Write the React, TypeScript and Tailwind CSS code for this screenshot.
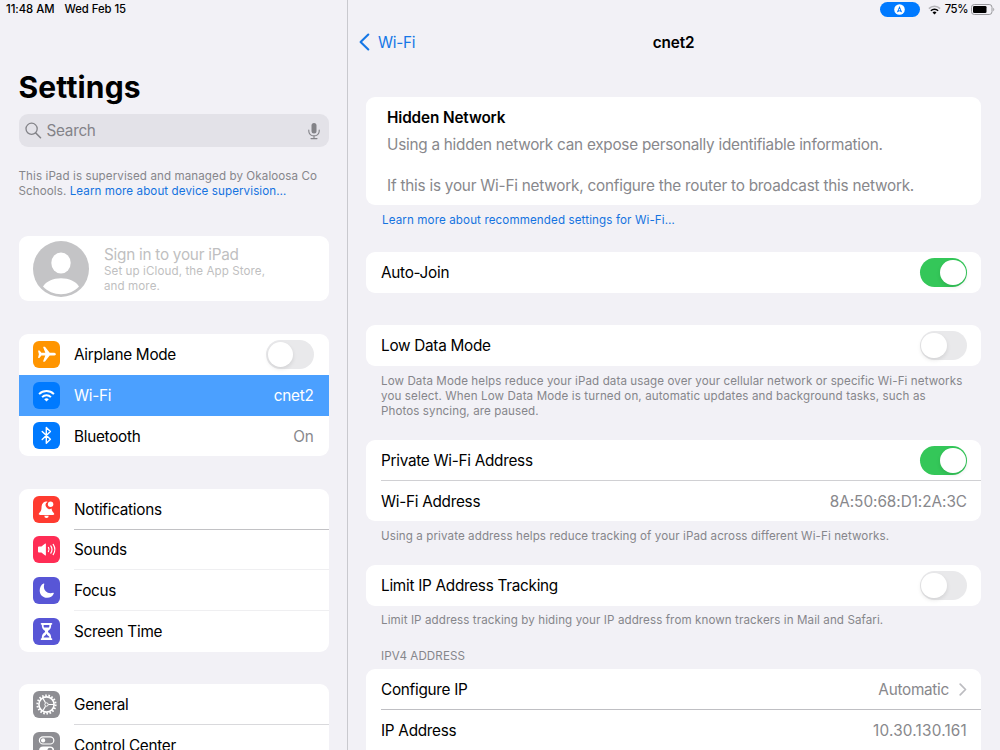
import type { ReactNode } from "react";

const body = "text-[15.3px] leading-[20px] tracking-[-0.27px]";
const foot = "text-[11.6px] leading-[14.8px] tracking-[0.09px]";

function Toggle({ on = false }: { on?: boolean }) {
  return (
    <span
      className={`flex h-[29px] w-[47.5px] shrink-0 items-center rounded-full px-[1.5px] ${
        on ? "justify-end bg-[#34c759]" : "justify-start bg-[#e9e9eb]"
      }`}
    >
      <span className="size-[25.5px] rounded-full bg-white shadow-[0_2px_4px_rgba(0,0,0,0.10)]" />
    </span>
  );
}

function Plane() {
  return (
    <svg viewBox="0 0 27 27" className="size-full" fill="#fff">
      <path d="M22.9 13.2c0 .8-1 1.4-2.6 1.4h-3.6l-4.5 5.700c-.2.3-.4.4-.8.4h-.9c-.3 0-.4-.3-.3-.6l2.1-5.500H8.400l-1.600 2c-.2.2-.3.3-.6.3h-.8c-.3 0-.4-.2-.3-.5l.8-3.200-.8-3.200c-.1-.3 0-.5.3-.5h.8c.3 0 .4.1.6.3l1.600 2h3.900l-2.100-5.500c-.1-.3 0-.6.3-.6h.9c.4 0 .6.1.8.4l4.500 5.700h3.600c1.600 0 2.600.6 2.600 1.400z" />
    </svg>
  );
}

function WifiGlyph() {
  return (
    <svg viewBox="0 0 27 27" className="size-full" fill="none" stroke="#fff" strokeWidth="2">
      <path d="M6.100 12.100a10.600 10.600 0 0 1 14.800 0" />
      <path d="M9.100 15.100a6.300 6.300 0 0 1 8.800 0" />
      <path d="M13.500 19.600l-2.300-2.300a3.300 3.300 0 0 1 4.600 0z" fill="#fff" stroke="none" />
    </svg>
  );
}

function BluetoothGlyph() {
  return (
    <svg viewBox="0 0 27 27" className="size-full" fill="none" stroke="#fff" strokeWidth="1.400" strokeLinejoin="round" strokeLinecap="round">
      <path d="M9.200 9.400l8.200 7.800-4.100 4.100V5.500l4.100 4.100-8.200 7.800" />
    </svg>
  );
}

function BellGlyph() {
  return (
    <svg viewBox="0 0 27 27" className="size-full" fill="#fff">
      <path d="M14.600 5.700a4.900 4.900 0 0 0-6 4.600c-.1 3.500-.6 4.800-1.700 6-.7.800-1.100 1.200-1.100 1.700 0 .6.500.9 1.200.9h13c.7 0 1.200-.3 1.200-.9 0-.5-.4-.9-1.100-1.700-.8-.9-1.300-1.900-1.500-3.800a3.700 3.700 0 0 1-4-6.800z" />
      <path d="M11.300 19.800h4.400a2.200 2.200 0 0 1-4.400 0z" />
      <circle cx="17.600" cy="8.300" r="2.700" />
    </svg>
  );
}

function SpeakerGlyph() {
  return (
    <svg viewBox="0 0 27 27" className="size-full" fill="none" stroke="#fff" strokeWidth="1.200" strokeLinecap="round">
      <path d="M5 11.500c0-.6.300-.9.900-.9h2.500l3.500-2.900c.6-.5 1-.3 1 .4v10.800c0 .7-.4.900-1 .4l-3.500-2.900H5.900c-.6 0-.9-.3-.9-.9z" fill="#fff" stroke="none" />
      <path d="M15.400 11.400a3.700 3.700 0 0 1 0 4.200M17.800 9.900a6.500 6.500 0 0 1 0 7.200M20.200 8.400a9.300 9.300 0 0 1 0 10.200" />
    </svg>
  );
}

function MoonGlyph() {
  return (
    <svg viewBox="0 0 27 27" className="size-full" fill="#fff">
      <path d="M10.600 6.500c.5-.2.900.1.700.6a7.600 7.600 0 0 0-.4 2.500c0 4 2.700 6.600 6.700 6.600 1 0 1.700-.1 2.500-.4.500-.2.900.2.700.7a7.300 7.300 0 0 1-6.700 4.300c-4.300 0-7.400-3.100-7.400-7.300 0-3.200 1.500-5.900 3.900-7z" />
    </svg>
  );
}

function HourglassGlyph() {
  return (
    <svg viewBox="0 0 27 27" className="size-full">
      <path fill="#fff" d="M8.600 4.900h9.800c.6 0 .9.300.9.900s-.3.900-.9.900h-.2c0 3-.7 4.400-2.700 5.800-.8.600-.8 1.400 0 2 2 1.400 2.700 2.800 2.700 5.800h.2c.6 0 .9.300.9.900s-.3.900-.9.900H8.600c-.6 0-.9-.3-.9-.9s.3-.9.900-.9h.2c0-3 .7-4.400 2.700-5.800.8-.6.8-1.400 0-2-2-1.400-2.700-2.800-2.700-5.800h-.2c-.6 0-.9-.3-.9-.9s.3-.9.900-.9z" />
      <path fill="#5856d6" d="M10.600 6.900h5.800c0 1.300-.1 2-.4 2.600h-5c-.3-.6-.4-1.300-.4-2.600zM13.500 15.400c.3 1.300 1 1.800 2 2.500.7.500.9 1 .9 1.700h-5.800c0-.7.200-1.200.9-1.700 1-.7 1.700-1.200 2-2.500z" />
    </svg>
  );
}

function GearGlyph() {
  return (
    <svg viewBox="0 0 27 27" className="size-full" fill="none" stroke="#fff">
      <circle cx="13.500" cy="13.500" r="9.100" strokeWidth="2" strokeDasharray="1.600 1.577" />
      <circle cx="13.500" cy="13.500" r="7.600" strokeWidth="1.600" />
      <circle cx="13.500" cy="13.500" r="1.700" strokeWidth="1" />
      <path strokeWidth="1.200" d="M15.400 13.500h5.400M12.500 11.800L9.900 7.200M12.500 15.200l-2.600 4.600" />
    </svg>
  );
}

function SwitchesGlyph() {
  return (
    <svg viewBox="0 0 27 27" className="size-full" fill="none" stroke="#fff" strokeWidth="1.200">
      <rect x="6.400" y="4.800" width="14.400" height="7.200" rx="3.600" />
      <circle cx="10.100" cy="8.400" r="2.100" fill="#fff" stroke="none" />
      <rect x="6.100" y="14.400" width="15" height="8" rx="4" fill="#fff" stroke="none" />
      <circle cx="17" cy="18.400" r="2.600" fill="#8e8e93" stroke="none" />
    </svg>
  );
}

function SideRow({
  icon,
  color,
  label,
  trailing,
  selected = false,
  line = "",
}: {
  icon: ReactNode;
  color: string;
  label: string;
  trailing?: ReactNode;
  selected?: boolean;
  line?: string;
}) {
  return (
    <div className={`flex h-[40.75px] items-center pl-[14.5px] ${selected ? "bg-[#4ba0ff] text-white" : "text-black"}`}>
      <span className={`size-[27px] shrink-0 overflow-hidden rounded-[6px] ${color}`}>{icon}</span>
      <span className={`ml-[14px] flex h-full grow items-center justify-between pr-[15px] ${line}`}>
        <span className={`pt-[2px] ${body}`}>{label}</span>
        {trailing}
      </span>
    </div>
  );
}

function Row({ label, children }: { label: string; children: ReactNode }) {
  return (
    <div className="ml-[15px] flex h-[40.75px] items-center justify-between pr-[14px] text-black">
      <span className={`pt-[1.5px] ${body}`}>{label}</span>
      {children}
    </div>
  );
}

function Sidebar() {
  return (
    <aside className="flex w-[348px] shrink-0 flex-col overflow-hidden border-r border-[#c9c9ce] pr-[18.5px] pl-[18.5px]">
      <h1 className="mt-[50px] text-[30px] leading-[36px] font-bold tracking-[0.160px]">Settings</h1>
      <div className="mt-[9px] flex h-[33px] shrink-0 items-center rounded-[9px] bg-[#e3e2e8] pr-[9px] pl-[6.500px] text-[#838388]">
        <svg viewBox="0 0 17 17" className="size-[17px]" fill="none" stroke="currentColor" strokeWidth="1.300" strokeLinecap="round">
          <circle cx="6.600" cy="6.800" r="5.600" />
          <path d="M10.800 11l4.700 4.700" strokeWidth="1.600" />
        </svg>
        <span className={`ml-[4.500px] grow pt-[1px] ${body}`}>Search</span>
        <svg viewBox="0 0 12 18" className="h-[18px] w-[12px]" fill="none" stroke="currentColor" strokeWidth="1.100" strokeLinecap="round">
          <rect x="3.500" y="1" width="5" height="10.500" rx="2.500" fill="currentColor" stroke="none" />
          <path d="M.8 8v1.300a5.200 4.600 0 0 0 10.400 0V8M6 14v2.500M3 16.600h6" />
        </svg>
      </div>
      <p className={`mt-[22px] text-[#86868b] ${foot}`}>
        This iPad is supervised and managed by Okaloosa Co
        <br />
        Schools. <span className="text-[#1573e0]">Learn more about device supervision…</span>
      </p>

      <div className="mt-[37.500px] flex h-[65px] shrink-0 items-center rounded-[9px] bg-white pl-[14.500px] text-[#bfbfc1]">
        <svg viewBox="0 0 56 56" className="size-[56px]">
          <circle cx="28" cy="28" r="28" fill="#c4c4c6" />
          <ellipse cx="28" cy="22" rx="9.700" ry="10.500" fill="#fff" />
          <path d="M10 45.500C13 40.500 20 37.300 28 37.300s15 3.200 18 8.200c-4.500 4.800-11 7.700-18 7.700s-13.500-2.900-18-7.700z" fill="#fff" />
        </svg>
        <div className="ml-[15px] pt-[2px]">
          <div className="text-[15.300px] leading-[18px] tracking-[-0.250px]">Sign in to your iPad</div>
          <div className={foot}>
            Set up iCloud, the App Store,
            <br />
            and more.
          </div>
        </div>
      </div>

      <div className="mt-[33px] shrink-0 overflow-hidden rounded-[9px] bg-white">
        <SideRow icon={<Plane />} color="bg-[#ff9500]" label="Airplane Mode" trailing={<Toggle />} />
        <SideRow icon={<WifiGlyph />} color="bg-[#007aff]" label="Wi-Fi" selected trailing={<span className={`pt-[2px] ${body}`}>cnet2</span>} />
        <SideRow icon={<BluetoothGlyph />} color="bg-[#007aff]" label="Bluetooth" trailing={<span className={`pt-[2px] text-[#88888c] ${body}`}>On</span>} />
      </div>

      <div className="mt-[32.500px] shrink-0 overflow-hidden rounded-[9px] bg-white">
        <SideRow icon={<BellGlyph />} color="bg-[#ff3b30]" label="Notifications" line="border-b border-[#c2c2c5]" />
        <SideRow icon={<SpeakerGlyph />} color="bg-[#ff2d55]" label="Sounds" line="border-b border-[#efeff1]" />
        <SideRow icon={<MoonGlyph />} color="bg-[#5856d6]" label="Focus" line="border-b border-[#efeff1]" />
        <SideRow icon={<HourglassGlyph />} color="bg-[#5856d6]" label="Screen Time" />
      </div>

      <div className="mt-[32.500px] shrink-0 overflow-hidden rounded-t-[9px] bg-white">
        <SideRow icon={<GearGlyph />} color="bg-[#8e8e93]" label="General" line="border-b border-[#d9d9dc]" />
        <SideRow icon={<SwitchesGlyph />} color="bg-[#8e8e93]" label="Control Center" />
      </div>
    </aside>
  );
}

function Detail() {
  return (
    <main className="flex min-w-0 grow flex-col overflow-hidden pr-[19px] pl-[18px]">
      <div className="-ml-[7px] mt-[12px] grid h-[22px] shrink-0 grid-cols-[1fr_auto_1fr] items-center">
        <span className="flex items-center text-[#1577e6]">
          <svg viewBox="0 0 11 18" className="h-[18px] w-[11px]" fill="none" stroke="currentColor" strokeWidth="2.100" strokeLinecap="round" strokeLinejoin="round">
            <path d="M9.300 1.500L1.600 9l7.700 7.500" />
          </svg>
          <span className={`ml-[8px] pt-[1.500px] ${body}`}>Wi-Fi</span>
        </span>
        <span className="pt-[1.500px] pl-[7px] text-[15.300px] leading-[20px] font-semibold tracking-[-0.100px]">cnet2</span>
      </div>

      <section className="mt-[43.500px] h-[108px] shrink-0 rounded-[9px] bg-white pt-[11px] pl-[21px]">
        <h2 className="text-[15.300px] leading-[20px] font-semibold tracking-[-0.120px]">Hidden Network</h2>
        <p className="mt-[7px] text-[15.300px] leading-[20px] tracking-[-0.250px] text-[#88888c]">
          Using a hidden network can expose personally identifiable information.
        </p>
        <p className="mt-[21px] text-[15.300px] leading-[20px] tracking-[-0.225px] text-[#88888c]">
          If this is your Wi-Fi network, configure the router to broadcast this network.
        </p>
      </section>
      <p className="mt-[8px] pl-[16px] text-[11.600px] leading-[14.800px] tracking-[0.120px] text-[#1573e0]">
        Learn more about recommended settings for Wi-Fi…
      </p>

      <section className="mt-[24.750px] shrink-0 rounded-[9px] bg-white">
        <Row label="Auto-Join">
          <Toggle on />
        </Row>
      </section>

      <section className="mt-[32.500px] shrink-0 rounded-[9px] bg-white">
        <Row label="Low Data Mode">
          <Toggle />
        </Row>
      </section>
      <p className={`mt-[8px] pl-[15px] text-[#86868b] ${foot}`}>
        Low Data Mode helps reduce your iPad data usage over your cellular network or specific Wi-Fi networks
        <br />
        <span className="tracking-[0.120px]">you select. When Low Data Mode is turned on, automatic updates and background tasks, such as</span>
        <br />
        Photos syncing, are paused.
      </p>

      <section className="mt-[21.500px] shrink-0 rounded-[9px] bg-white">
        <Row label="Private Wi-Fi Address">
          <Toggle on />
        </Row>
        <div className="-mt-px ml-[15px] h-px bg-[#d0d0d3]" />
        <Row label="Wi-Fi Address">
          <span className="pt-[1.500px] text-[15.300px] leading-[20px] tracking-[-0.030px] text-[#88888c]">8A:50:68:D1:2A:3C</span>
        </Row>
      </section>
      <p className={`mt-[7.250px] pl-[15px] text-[#86868b] ${foot}`}>
        Using a private address helps reduce tracking of your iPad across different Wi-Fi networks.
      </p>

      <section className="mt-[21.750px] shrink-0 rounded-[9px] bg-white">
        <Row label="Limit IP Address Tracking">
          <Toggle />
        </Row>
      </section>
      <p className={`mt-[7.500px] pl-[15px] text-[#86868b] ${foot}`}>
        Limit IP address tracking by hiding your IP address from known trackers in Mail and Safari.
      </p>

      <h3 className={`mt-[20.600px] pl-[15px] text-[#86868b] ${foot}`}>IPV4 ADDRESS</h3>
      <section className="mt-[5.500px] shrink-0 rounded-t-[9px] bg-white">
        <Row label="Configure IP">
          <span className={`flex items-center text-[#88888c] ${body}`}>
            <span className="pt-[1.500px]">Automatic</span>
            <svg viewBox="0 0 8 13" className="ml-[10px] h-[13px] w-[8px]" fill="none" stroke="#bcbcc0" strokeWidth="1.700" strokeLinecap="round" strokeLinejoin="round">
              <path d="M1.200 1.200l5.300 5.300-5.300 5.300" />
            </svg>
          </span>
        </Row>
        <div className="-mt-px ml-[15px] h-px bg-[#bfbfc3]" />
        <Row label="IP Address">
          <span className="pt-[1.500px] text-[15.300px] leading-[20px] tracking-[0.210px] text-[#88888c]">10.30.130.161</span>
        </Row>
      </section>
    </main>
  );
}

function StatusBar() {
  return (
    <header className="flex h-[19px] shrink-0 text-[11.300px] leading-[19px] font-medium tracking-[-0.030px]">
      <div className="flex w-[348px] shrink-0 border-r border-[#c9c9ce] pl-[6px]">
        <span>11:48 AM</span>
        <span className="ml-[10px]">Wed Feb 15</span>
      </div>
      <div className="flex grow items-center justify-end pr-[5px]">
        <span className="flex h-[15px] w-[40.500px] items-center justify-center rounded-full bg-[#007aff]">
          <svg viewBox="0 0 11 11" className="size-[11px]">
            <circle cx="5.500" cy="5.500" r="5.300" fill="#fff" />
            <path d="M5.500 2.100L8.200 8.500 5.500 7.200 2.800 8.500z" fill="#007aff" />
            <circle cx="5.500" cy="5.700" r=".7" fill="#fff" />
          </svg>
        </span>
        <svg viewBox="0 0 13 10" className="ml-[7.500px] h-[10px] w-[13px]" fill="none" strokeWidth="1.600">
          <path d="M.9 3.600a8 8 0 0 1 11.200 0" stroke="#b5b5b9" />
          <path d="M2.900 5.800a5.100 5.100 0 0 1 7.200 0" stroke="#000" />
          <path d="M6.500 9.500L4.500 7.500a2.900 2.900 0 0 1 4 0z" fill="#000" />
        </svg>
        <span className="ml-[4px] tracking-[-0.400px]">75%</span>
        <svg viewBox="0 0 24 11" className="ml-[3px] h-[11px] w-[24px]">
          <rect x=".5" y=".5" width="20.500" height="10" rx="2.800" fill="none" stroke="#98989c" />
          <rect x="2" y="2" width="13.500" height="7" rx="1.300" fill="#000" />
          <path d="M22.300 3.800c1.300.4 1.300 3 0 3.400z" fill="#98989c" />
        </svg>
      </div>
    </header>
  );
}

export default function App() {
  return (
    <div className="flex h-[750px] w-[1000px] flex-col overflow-hidden bg-[#f2f1f6] font-['Inter',sans-serif] text-black">
      <StatusBar />
      <div className="flex min-h-0 grow">
        <Sidebar />
        <Detail />
      </div>
    </div>
  );
}
